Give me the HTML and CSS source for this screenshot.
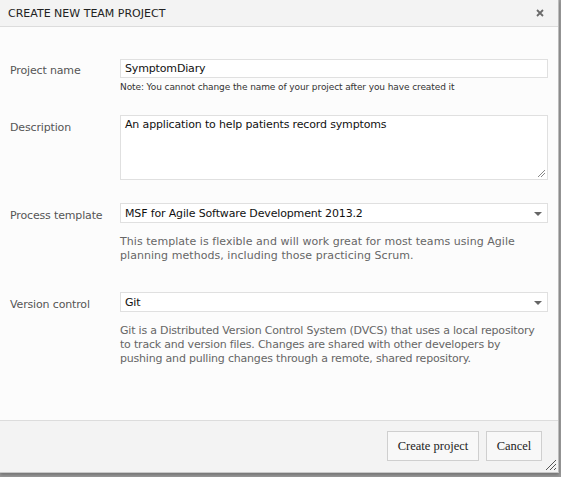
FILE: index.html
```html
<!DOCTYPE html>
<html>
<head>
<meta charset="utf-8">
<link rel="stylesheet" href="styles.css">
</head>
<body>
<div class="dialog">
  <div class="header">
    <span class="title">CREATE NEW TEAM PROJECT</span>
    <svg class="close" width="8" height="8" viewBox="0 0 8 8"><path d="M1 1 L7 7 M7 1 L1 7" stroke="#6a6a6a" stroke-width="1.8"/></svg>
  </div>
  <div class="content">
    <div class="row row-name">
      <div class="label">Project name</div>
      <div class="field">
        <div class="input">SymptomDiary</div>
        <div class="note">Note: You cannot change the name of your project after you have created it</div>
      </div>
    </div>
    <div class="row row-desc">
      <div class="label">Description</div>
      <div class="field">
        <div class="textarea">An application to help patients record symptoms
          <svg class="grip-small" width="7" height="7" viewBox="0 0 7 7"><path d="M7 0 L0 7 M7 3 L3 7" stroke="#888" stroke-width="1"/></svg>
        </div>
      </div>
    </div>
    <div class="row row-proc">
      <div class="label">Process template</div>
      <div class="field">
        <div class="select">MSF for Agile Software Development 2013.2<span class="arrow"></span></div>
        <div class="help">This template is flexible and will work great for most teams using Agile<br>planning methods, including those practicing Scrum.</div>
      </div>
    </div>
    <div class="row row-vc">
      <div class="label">Version control</div>
      <div class="field">
        <div class="select">Git<span class="arrow"></span></div>
        <div class="help help-vc">Git is a Distributed Version Control System (DVCS) that uses a local repository<br>to track and version files. Changes are shared with other developers by<br>pushing and pulling changes through a remote, shared repository.</div>
      </div>
    </div>
  </div>
  <div class="footer">
    <button class="btn btn-create">Create project</button>
    <button class="btn btn-cancel">Cancel</button>
    <svg class="grip" width="10" height="10" viewBox="0 0 10 10"><path d="M10 0 L0 10 M10 4 L4 10 M10 8 L8 10" stroke="#555" stroke-width="1"/></svg>
  </div>
</div>
</body>
</html>
```
FILE: styles.css
```css
html, body {
  margin: 0;
  padding: 0;
}
body {
  width: 561px;
  height: 477px;
  background: #9a9a9a;
  font-family: "DejaVu Sans", sans-serif;
  overflow: hidden;
}
.dialog {
  width: 558px;
  height: 472px;
  background: #fcfcfc;
  border-right: 1px solid #bcbcbc;
  border-bottom: 1px solid #c8c8c8;
  display: flex;
  flex-direction: column;
  box-shadow: 0 2px 3px rgba(0,0,0,0.25);
}
.header {
  height: 27px;
  background: #f3f3f3;
  border-bottom: 1px solid #dcdcdc;
  display: flex;
  align-items: center;
  justify-content: space-between;
  padding: 0 14px 0 8px;
  box-sizing: border-box;
  flex: none;
}
.title {
  font-size: 11px;
  color: #222;
}
.content {
  flex: 1;
  padding: 32px 10px 0 10px;
  display: flex;
  flex-direction: column;
}
.row {
  display: flex;
}
.label {
  width: 110px;
  font-size: 11px;
  letter-spacing: -0.15px;
  color: #555;
  padding-top: 6px;
  flex: none;
}
.row-name .label { padding-top: 5px; }
.field {
  width: 428px;
}
.input, .select, .textarea {
  border: 1px solid #e0e0e0;
  background: #fff;
  font-size: 11px;
  letter-spacing: -0.15px;
  color: #111;
  box-sizing: border-box;
  padding: 2px 4px;
  position: relative;
}
.input {
  height: 19px;
}
.select { height: 20px; padding-top: 3px; }
.textarea {
  height: 65px;
}
.grip-small {
  position: absolute;
  right: 2px;
  bottom: 2px;
}
.arrow {
  position: absolute;
  right: 5px;
  top: 8px;
  width: 0;
  height: 0;
  border-left: 4px solid transparent;
  border-right: 4px solid transparent;
  border-top: 4px solid #666;
}
.note {
  font-size: 9px;
  letter-spacing: -0.1px;
  color: #333;
  margin-top: 4px;
}
.help {
  font-size: 11px;
  letter-spacing: 0.05px;
  color: #666;
  line-height: 14px;
  margin-top: 12px;
  white-space: nowrap;
}
.help-vc {
  letter-spacing: -0.2px;
}
.row-desc { margin-top: 23px; }
.row-proc { margin-top: 23px; }
.row-vc { margin-top: 29px; }
.footer {
  height: 52px;
  flex: none;
  background: #f3f3f3;
  border-top: 1px solid #dcdcdc;
  display: flex;
  justify-content: flex-end;
  align-items: flex-start;
  padding: 10px 16px 0 0;
  box-sizing: border-box;
  gap: 7px;
  position: relative;
}
.btn {
  height: 30px;
  background: #f8f8f8;
  border: 1px solid #cfcfcf;
  font-family: "Liberation Serif", serif;
  font-size: 12.5px;
  color: #222;
  padding: 0;
  margin: 0;
}
.btn-create { width: 92px; }
.btn-cancel { width: 56px; }
.grip {
  position: absolute;
  right: 2px;
  bottom: 2px;
}
```
